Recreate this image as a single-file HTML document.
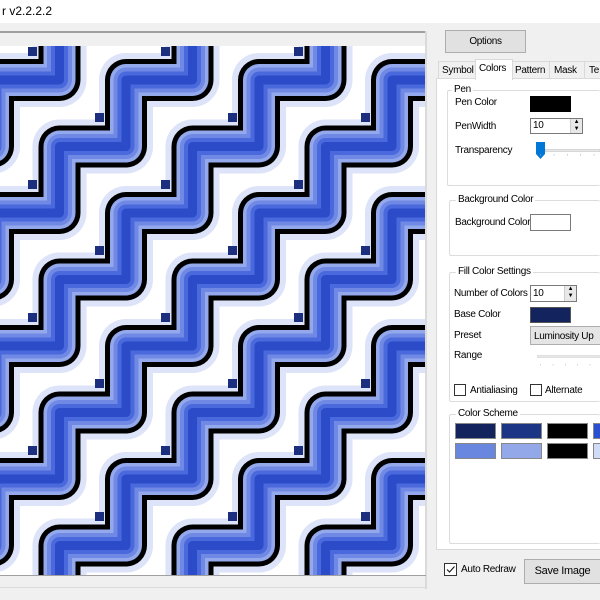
<!DOCTYPE html>
<html><head><meta charset="utf-8">
<style>
*{margin:0;padding:0;box-sizing:border-box}
html,body{width:600px;height:600px;overflow:hidden}
body{background:#f0f0f0;font-family:"Liberation Sans",sans-serif;font-size:10px;letter-spacing:-0.3px;color:#000;position:relative}
.a{position:absolute}
.t{position:absolute;white-space:nowrap}
.box{position:absolute;border:1px solid #7a7a7a}
.grp{position:absolute;border:1px solid #dcdcdc;border-radius:2px}
.gl{position:absolute;background:#fff;padding:0 2px;white-space:nowrap;top:-7px;left:6px}
.btn{position:absolute;background:#e1e1e1;border:1px solid #adadad;text-align:center}
.sw{position:absolute;width:41px;height:16px;border:1px solid #888}
</style></head><body>
<div class="a" style="left:0;top:0;width:600px;height:23px;background:#fff"></div>
<div class="t" style="left:2px;top:4px;font-size:12px;letter-spacing:0">r v2.2.2.2</div>
<div class="a" style="left:0;top:31px;width:426px;height:2px;background:#a0a0a0"></div>
<div class="a" style="left:425px;top:31px;width:2px;height:558px;background:#dadada"></div>
<div class="a" style="left:0;top:587px;width:427px;height:1px;background:#dadada"></div>
<div class="a" style="left:0;top:575px;width:426px;height:1px;background:#a0a0a0"></div>
<svg class="a" style="left:0;top:46px" width="425" height="529" viewBox="0 46 425 529">
<defs>
<path id="s" fill="none" stroke-linejoin="round" d="M658,-385.5 L591.5,-385.5 L591.5,-319 L525,-319 L525,-252.5 L458.5,-252.5 L458.5,-186 L392,-186 L392,-119.5 L325.5,-119.5 L325.5,-53 L259,-53 L259,13.5 L192.5,13.5 L192.5,80 L126,80 L126,146.5 L59.5,146.5 L59.5,213 L-7,213 L-7,279.5 L-73.5,279.5 L-73.5,346 L-140,346 L-140,412.5 L-206.5,412.5 L-206.5,479 L-273,479 L-273,545.5 L-339.5,545.5 L-339.5,612 L-406,612 L-406,680"/>
<g id="L">
<use href="#s" stroke="#dde3f8" stroke-width="54"/>
<use href="#s" stroke="#000" stroke-width="42"/>
<use href="#s" stroke="#94a8ec" stroke-width="32"/>
<use href="#s" stroke="#7089e4" stroke-width="25"/>
<use href="#s" stroke="#4a69dc" stroke-width="17"/>
<use href="#s" stroke="#2b4bc8" stroke-width="9"/>
</g>
</defs>
<rect x="0" y="46" width="425" height="529" fill="#fff"/>
<use href="#L" x="-133"/><use href="#L"/><use href="#L" x="133"/><use href="#L" x="266"/><use href="#L" x="399"/><use href="#L" x="532"/><use href="#L" x="665"/><use href="#L" x="798"/>
<g fill="#1b2f7e">
<rect x="28" y="47" width="9" height="9"/><rect x="161" y="47" width="9" height="9"/><rect x="294" y="47" width="9" height="9"/>
<rect x="95" y="113" width="9" height="9"/><rect x="228" y="113" width="9" height="9"/><rect x="361" y="113" width="9" height="9"/>
<rect x="28" y="180" width="9" height="9"/><rect x="161" y="180" width="9" height="9"/><rect x="294" y="180" width="9" height="9"/>
<rect x="95" y="246" width="9" height="9"/><rect x="228" y="246" width="9" height="9"/><rect x="361" y="246" width="9" height="9"/>
<rect x="28" y="313" width="9" height="9"/><rect x="161" y="313" width="9" height="9"/><rect x="294" y="313" width="9" height="9"/>
<rect x="95" y="379" width="9" height="9"/><rect x="228" y="379" width="9" height="9"/><rect x="361" y="379" width="9" height="9"/>
<rect x="28" y="446" width="9" height="9"/><rect x="161" y="446" width="9" height="9"/><rect x="294" y="446" width="9" height="9"/>
<rect x="95" y="512" width="9" height="9"/><rect x="228" y="512" width="9" height="9"/><rect x="361" y="512" width="9" height="9"/>
</g>
</svg>

<div class="btn" style="left:445px;top:30px;width:81px;height:23px;line-height:21px">Options</div>
<div class="a" style="left:436px;top:78px;width:164px;height:472px;background:#fff;border:1px solid #d9d9d9;border-right:none"></div>
<div class="a" style="left:438px;top:61px;width:38px;height:18px;border:1px solid #d9d9d9;background:#f0f0f0"></div>
<div class="t" style="left:442px;top:65px">Symbol</div>
<div class="a" style="left:475px;top:59px;width:38px;height:21px;border:1px solid #d9d9d9;border-bottom:none;background:#fff"></div>
<div class="t" style="left:479px;top:63px">Colors</div>
<div class="a" style="left:512px;top:61px;width:38px;height:18px;border:1px solid #d9d9d9;background:#f0f0f0"></div>
<div class="t" style="left:515px;top:65px">Pattern</div>
<div class="a" style="left:549px;top:61px;width:36px;height:18px;border:1px solid #d9d9d9;background:#f0f0f0"></div>
<div class="t" style="left:554px;top:65px">Mask</div>
<div class="a" style="left:584px;top:61px;width:16px;height:18px;border:1px solid #d9d9d9;border-right:none;background:#f0f0f0"></div>
<div class="t" style="left:589px;top:65px">Te</div>

<div class="grp" style="left:447px;top:90px;width:153px;height:96px;border-right:none"><span class="gl" style="left:4px">Pen</span></div>
<div class="t" style="left:455px;top:97px">Pen Color</div>
<div class="a" style="left:530px;top:96px;width:41px;height:16px;background:#000"></div>
<div class="t" style="left:455px;top:121px">PenWidth</div>
<div class="box" style="left:530px;top:118px;width:53px;height:16px;background:#fff"></div>
<div class="t" style="left:533px;top:120px">10</div>
<div class="a" style="left:570px;top:119px;width:12px;height:14px;background:#e8e8e8;border-left:1px solid #ccc;font-size:6px;line-height:7px;text-align:center">▲<br>▼</div>
<div class="t" style="left:455px;top:145px">Transparency</div>
<div class="a" style="left:545px;top:149px;width:55px;height:3px;background:#e7e7e7;border:1px solid #d6d6d6"></div>
<svg class="a" style="left:536px;top:142px" width="10" height="18"><path d="M0,0H9V12L4.5,17L0,12Z" fill="#0078d7"/></svg>
<div class="t" style="left:540px;top:154px;color:#aaa;font-size:7px;letter-spacing:12px">'''''</div>

<div class="grp" style="left:449px;top:200px;width:151px;height:56px;border-right:none"><span class="gl">Background Color</span></div>
<div class="t" style="left:455px;top:217px">Background Color</div>
<div class="box" style="left:530px;top:214px;width:41px;height:17px;background:#fff"></div>

<div class="grp" style="left:449px;top:272px;width:151px;height:130px;border-right:none"><span class="gl">Fill Color Settings</span></div>
<div class="t" style="left:454px;top:288px">Number of Colors</div>
<div class="box" style="left:530px;top:285px;width:47px;height:17px;background:#fff"></div>
<div class="t" style="left:533px;top:288px">10</div>
<div class="a" style="left:564px;top:286px;width:12px;height:15px;background:#e8e8e8;border-left:1px solid #ccc;font-size:6px;line-height:7px;text-align:center">▲<br>▼</div>
<div class="t" style="left:454px;top:309px">Base Color</div>
<div class="a" style="left:530px;top:307px;width:41px;height:16px;background:#13235e;border:1px solid #555"></div>
<div class="t" style="left:454px;top:330px">Preset</div>
<div class="a" style="left:530px;top:326px;width:70px;height:19px;background:#e5e5e5;border:1px solid #adadad;border-right:none"></div>
<div class="t" style="left:534px;top:331px">Luminosity Up</div>
<div class="t" style="left:454px;top:350px">Range</div>
<div class="a" style="left:537px;top:355px;width:63px;height:3px;background:#e7e7e7;border:1px solid #e0e0e0"></div>
<div class="t" style="left:540px;top:364px;color:#bbb;font-size:7px;letter-spacing:11px">'''''</div>
<div class="box" style="left:454px;top:384px;width:12px;height:12px;background:#fff;border-color:#333"></div>
<div class="t" style="left:470px;top:385px">Antialiasing</div>
<div class="box" style="left:530px;top:384px;width:12px;height:12px;background:#fff;border-color:#333"></div>
<div class="t" style="left:545px;top:385px">Alternate</div>

<div class="grp" style="left:449px;top:414px;width:151px;height:130px;border-right:none"><span class="gl">Color Scheme</span></div>
<div class="sw" style="left:455px;top:423px;background:#13235e"></div>
<div class="sw" style="left:501px;top:423px;background:#1c3585"></div>
<div class="sw" style="left:547px;top:423px;background:#000"></div>
<div class="sw" style="left:593px;top:423px;background:#2a4fd0"></div>
<div class="sw" style="left:455px;top:443px;background:#6a87e0"></div>
<div class="sw" style="left:501px;top:443px;background:#93a8e8"></div>
<div class="sw" style="left:547px;top:443px;background:#000"></div>
<div class="sw" style="left:593px;top:443px;background:#d0dbf5"></div>

<div class="box" style="left:444px;top:563px;width:13px;height:13px;background:#fff;border-color:#333"></div>
<svg class="a" style="left:445px;top:564px" width="11" height="11"><path d="M2,5.5L4.5,8L9.5,2.5" fill="none" stroke="#222" stroke-width="1.2"/></svg>
<div class="t" style="left:461px;top:564px">Auto Redraw</div>
<div class="btn" style="left:524px;top:559px;width:76px;height:25px;line-height:23px;font-size:11px;border-right:none">Save Image</div>
</body></html>
